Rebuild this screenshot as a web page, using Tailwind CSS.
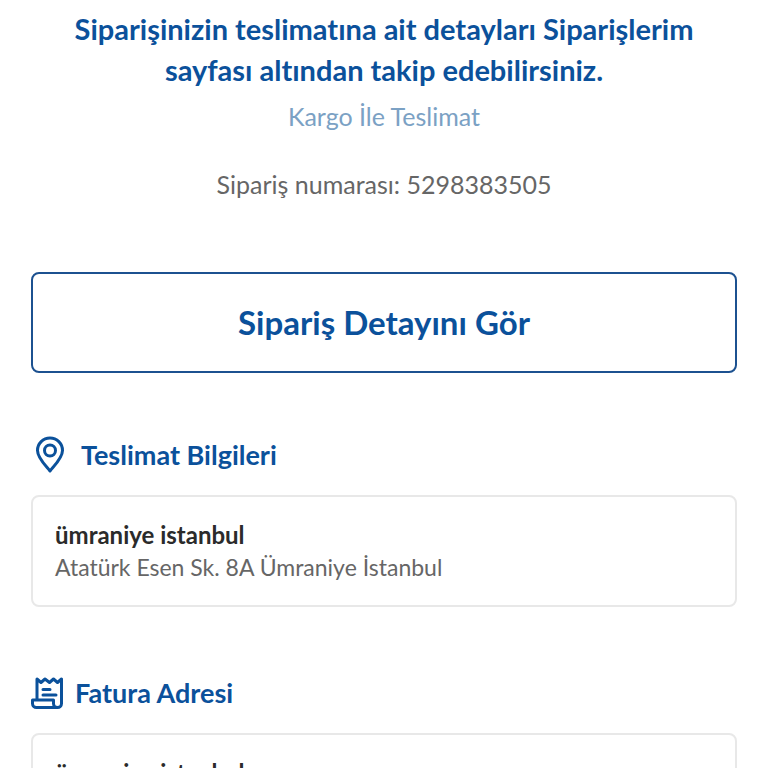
<!DOCTYPE html>
<html lang="tr">
<head>
<meta charset="utf-8">
<meta name="viewport" content="width=device-width, initial-scale=1">
<title>Sipariş Özeti</title>
<script src="https://cdn.jsdelivr.net/npm/@tailwindcss/browser@4"></script>
</head>
<body class="bg-white font-['Lato',sans-serif] text-[#666] [font-variant-ligatures:none]">
<div class="h-screen overflow-hidden">
<main class="px-[31px] pt-2">
  <header class="text-center">
    <h1 class="mx-auto max-w-[660px] text-[29px] leading-[41px] font-bold text-[#0b519b]">Siparişinizin teslimatına ait detayları Siparişlerim sayfası altından takip edebilirsiniz.</h1>
    <p class="mt-2 text-[25px] leading-9 text-[#7ba1c4]">Kargo İle Teslimat</p>
    <p class="mt-8 text-[25px] leading-9">Sipariş numarası: 5298383505</p>
  </header>
  <button type="button" class="mt-[70px] h-[101px] w-full rounded-lg border-2 border-[#1c5190] text-[33px] font-bold text-[#0b519b]">Sipariş Detayını Gör</button>

  <section class="mt-[62px]">
    <h2 class="flex h-10 items-center gap-3 text-[27px] font-bold text-[#0b519b]">
      <svg class="h-[38px] w-[38px]" viewBox="0 0 38 38" fill="none" stroke="currentColor" stroke-width="3" stroke-linejoin="round" aria-hidden="true">
        <path d="M19 35C15 30 6.500 22 6.500 14.500a12.500 12.500 0 0 1 25 0C31.500 22 23 30 19 35Z"/>
        <circle cx="19" cy="14.500" r="5.500"/>
      </svg>
      Teslimat Bilgileri
    </h2>
    <div class="mt-5 rounded-lg border-2 border-[#e8e8e8] px-[22px] py-[21px]">
      <p class="text-[24px] leading-[33px] font-bold text-[#2b2b2b]">ümraniye istanbul</p>
      <p class="text-[23px] leading-[33px]">Atatürk Esen Sk. 8A Ümraniye İstanbul</p>
    </div>
  </section>

  <section class="mt-[66px]">
    <h2 class="flex h-10 items-center gap-3 text-[27px] font-bold text-[#0b519b]">
      <svg class="h-8 w-8" viewBox="0 0 32 32" fill="none" stroke="currentColor" stroke-width="3" stroke-linejoin="round" stroke-linecap="round" aria-hidden="true">
        <path d="M6 22V2l4 3.500L14 2l4.500 3.500L22.500 2l4 3.500L30.500 2v24.500a4 4 0 0 1-8 0V23H1.500v3.500a4 4 0 0 0 4 4h21"/>
        <path d="M12 12.500h7M12 18h13"/>
      </svg>
      Fatura Adresi
    </h2>
    <div class="mt-5 rounded-lg border-2 border-[#e8e8e8] px-[22px] py-[21px]">
      <p class="text-[24px] leading-[33px] font-bold text-[#2b2b2b]">ümraniye istanbul</p>
      <p class="text-[23px] leading-[33px]">Atatürk Esen Sk. 8A Ümraniye İstanbul</p>
    </div>
  </section>
</main>
</div>
</body>
</html>
